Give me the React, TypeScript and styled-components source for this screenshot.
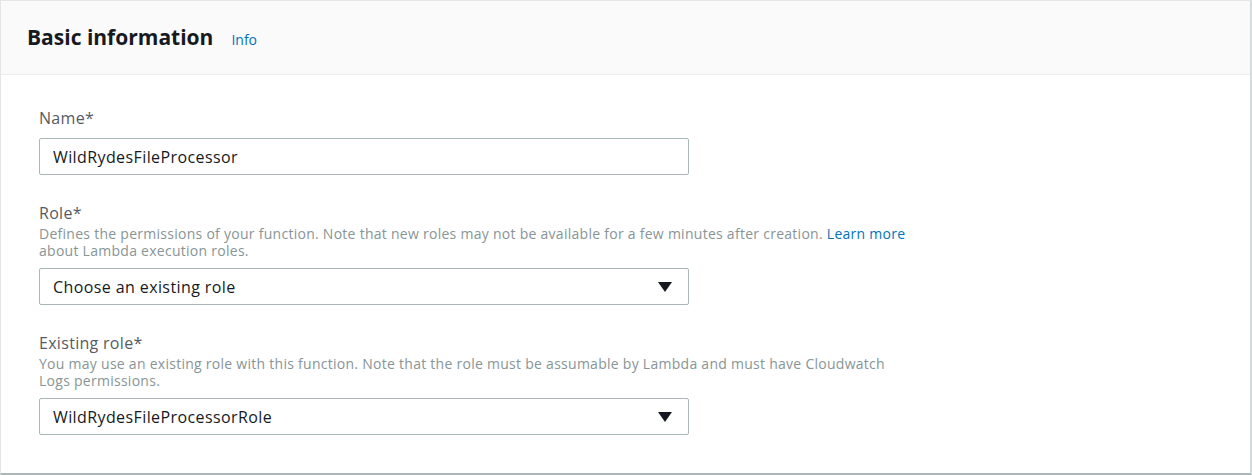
import React from "react";
import styled, { createGlobalStyle } from "styled-components";

const Global = createGlobalStyle`
  html, body { margin: 0; padding: 0; background: #ffffff; }
  body { font-family: "Open Sans", "Noto Sans", Arial, sans-serif; }
  * { box-sizing: border-box; }
`;

const Panel = styled.section`
  width: 1252px;
  height: 475px;
  background: #ffffff;
  border-top: 1px solid #e4e6e6;
  border-left: 1px solid #e4e6e6;
  border-right: 2px solid #d5dbdb;
  border-bottom: 2px solid #aab7b8;
  display: flex;
  flex-direction: column;
`;

const Header = styled.header`
  height: 74px;
  background: #fafafa;
  border-bottom: 1px solid #eaeded;
  display: flex;
  align-items: baseline;
  padding: 21px 0 0 26px;
  gap: 18px;
`;

const Title = styled.h2`
  margin: 0;
  font-size: 21px;
  font-weight: 700;
  color: #16191f;
  line-height: 30px;
`;

const InfoLink = styled.a`
  font-size: 14px;
  color: #0073bb;
  text-decoration: none;
`;

const Body = styled.div`
  padding: 33px 0 0 38px;
  display: flex;
  flex-direction: column;
  gap: 28px;
`;

const Field = styled.div`
  display: flex;
  flex-direction: column;
`;

const Label = styled.label`
  display: block;
  font-size: 16px;
  letter-spacing: 0.3px;
  color: #545b64;
  line-height: 20px;
`;

const Description = styled.p`
  margin: 2px 0 9px;
  font-size: 14px;
  letter-spacing: 0.27px;
  line-height: 17px;
  color: #879596;
  max-width: 872px;
`;

const Link = styled.a`
  color: #0073bb;
  text-decoration: none;
`;

const Control = styled.div`
  width: 650px;
  height: 37px;
  border: 1px solid #aab7b8;
  border-radius: 2px;
  background: #ffffff;
  display: flex;
  align-items: center;
  justify-content: space-between;
  padding: 0 16px 0 13px;
  font-size: 16px;
  letter-spacing: 0.4px;
  color: #16191f;

  ${Label} + & {
    margin-top: 10px;
  }
`;

const Caret = () => (
  <svg width="14" height="10" viewBox="0 0 14 10" aria-hidden="true">
    <polygon points="0,0 14,0 7,10" fill="#16191f" />
  </svg>
);

export default function App() {
  return (
    <>
      <Global />
      <Panel>
        <Header>
          <Title>Basic information</Title>
          <InfoLink href="#">Info</InfoLink>
        </Header>
        <Body>
          <Field>
            <Label>Name*</Label>
            <Control>WildRydesFileProcessor</Control>
          </Field>
          <Field>
            <Label>Role*</Label>
            <Description>
              Defines the permissions of your function. Note that new roles may not be available for a few minutes after creation.{" "}
              <Link href="#">Learn more</Link> about Lambda execution roles.
            </Description>
            <Control>
              <span>Choose an existing role</span>
              <Caret />
            </Control>
          </Field>
          <Field>
            <Label>Existing role*</Label>
            <Description>
              You may use an existing role with this function. Note that the role must be assumable by Lambda and must have Cloudwatch Logs permissions.
            </Description>
            <Control>
              <span>WildRydesFileProcessorRole</span>
              <Caret />
            </Control>
          </Field>
        </Body>
      </Panel>
    </>
  );
}
